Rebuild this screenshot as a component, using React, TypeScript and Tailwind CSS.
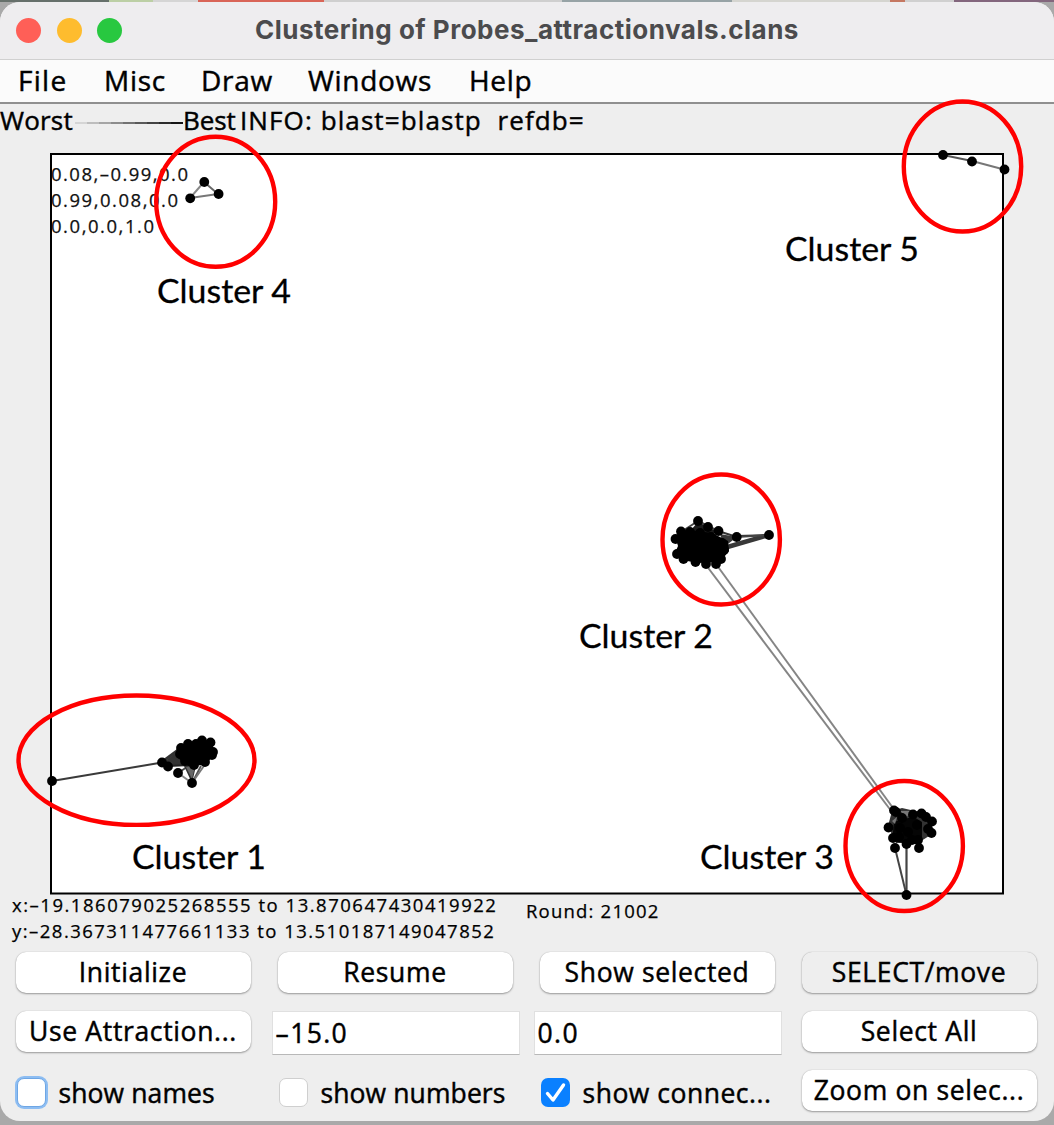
import type { ReactNode } from "react";

type Point = [number, number];
type Edge = [number, number, number, number, string, number?];

const clusters = [
  { label: "Cluster 1", x: 132, y: 869, cx: 136.5, cy: 760.2, rx: 118, ry: 64.7 },
  { label: "Cluster 2", x: 579, y: 648, cx: 721.2, cy: 539.5, rx: 58.7, ry: 65 },
  { label: "Cluster 3", x: 700, y: 869, cx: 904.2, cy: 846, rx: 58.7, ry: 65 },
  { label: "Cluster 4", x: 157, y: 303, cx: 215.7, cy: 201.8, rx: 59.5, ry: 65 },
  { label: "Cluster 5", x: 785, y: 261, cx: 962.5, cy: 166.5, rx: 58.7, ry: 65 },
];

const edges: Edge[] = [
  [943, 155, 972, 161, "#555"],
  [972, 161, 1004, 169.5, "#777"],
  [204, 182, 190, 198, "#888"],
  [204, 182, 218, 194, "#666"],
  [190, 198, 218, 194, "#777"],
  [52, 781, 162, 762.5, "#3a3a3a", 2],
  [162, 762, 185, 745, "#333", 3],
  [162, 763, 190, 765, "#333", 3],
  [168, 766, 190, 765, "#222", 2],
  [178, 773, 192, 783, "#888"],
  [178, 773, 190, 765, "#444"],
  [192, 783, 201, 766, "#555"],
  [192, 783, 206, 763, "#777"],
  [706, 565, 892, 812, "#858585", 2],
  [716, 564, 893, 808, "#858585", 2],
  [698, 521, 681, 532, "#444", 2],
  [698, 521, 718, 531, "#444", 2],
  [718, 531, 737, 537, "#333", 2],
  [737, 536, 769, 535, "#333", 2],
  [769, 535, 724, 548, "#383838", 4.5],
  [769, 535, 737, 537, "#444", 2],
  [895, 848, 906.5, 895, "#444", 2],
  [906.5, 845, 906.5, 895, "#444", 2.2],
];

const nodes: Point[] = [
  [943, 155], [972, 161.5], [1004.5, 169.5],
  [204.3, 182], [190.2, 198.3], [218.6, 194],
  [52, 781], [162, 762.5], [168, 766.5], [178, 773], [192, 783],
  [181, 748], [188, 744], [202, 740.5], [210.5, 742.5], [213, 752], [212, 755],
  [205, 762], [194, 765], [185, 761], [180, 754], [196, 744], [200, 757], [208, 748], [190, 750],
  [698, 521], [708, 527], [718.5, 531], [736.7, 537], [769, 535],
  [681, 531.5], [675.5, 539], [677, 554], [683.5, 559], [695.5, 562], [706, 564],
  [716, 564], [721, 559], [724, 550], [722, 543], [690, 532], [700, 533], [711, 537],
  [894, 810.5], [896, 812], [888.5, 827.5], [895, 848], [919, 848], [906.5, 895],
  [913, 814.5], [921.5, 813.5], [926, 817], [932, 821.5], [931.5, 833], [928, 829],
  [902, 818], [893, 838], [906.5, 844], [918, 840], [900, 828], [908, 832], [917, 825], [899, 837], [912, 840],
];

const gradient = ["#d5d5d5", "#bdbdbd", "#a5a5a5", "#8c8c8c", "#727272", "#5a5a5a", "#434343", "#2c2c2c", "#151515"];

function Plot() {
  return (
    <svg viewBox="50 153 954 742" className="block h-[742px] w-[954px] overflow-visible">
      <rect x="51" y="154" width="952" height="739.5" fill="#fff" stroke="#000" strokeWidth="2" />
      <g fontFamily="Open Sans, sans-serif" fontSize="18.5" fill="#111" stroke="#111" strokeWidth="0.25">
        <text x="51" y="180.5" textLength="137">0.08,–0.99,0.0</text>
        <text x="51" y="206.5" textLength="127">0.99,0.08,0.0</text>
        <text x="51" y="233" textLength="103">0.0,0.0,1.0</text>
      </g>
      {edges.map(([x1, y1, x2, y2, stroke, w], i) => (
        <line key={i} x1={x1} y1={y1} x2={x2} y2={y2} stroke={stroke} strokeWidth={w ?? 1.9} />
      ))}
      <path d="M164 762L182 748V764ZM184 766L192 783L196 766Z" fill="#333" />
      <path d="M186 767L192 779L195 766Z" fill="#666" />
      <path d="M720 534L737 537L724 547Z" fill="#383838" />
      <path d="M698 522L714 530V540H682Z" fill="#1c1c1c" />
      <path d="M178 748L188 742L204 742L213 746L214 756L204 765L188 766L178 758Z" fill="#000" />
      <path d="M675 536L684 530L698 531L712 533L728 541L729 551L720 562L698 563L682 560L675 553L678 546Z" fill="#000" />
      <path d="M892 811L902 808L924 813L931 822L929 836L918 843L896 843L888 826Z" fill="#333" />
      <path d="M894 822L903 819L914 817L922 822V838L910 844L892 841Z" fill="#050505" />
      <path d="M900 811L911 811L907 817ZM892 821L897 817L895 824Z" fill="#777" />
      {nodes.map(([cx, cy], i) => (
        <circle key={i} cx={cx} cy={cy} r="4.9" />
      ))}
      <g fill="none" stroke="#f00" strokeWidth="4.4">
        {clusters.map((c) => (
          <ellipse key={c.label} cx={c.cx} cy={c.cy} rx={c.rx} ry={c.ry} />
        ))}
      </g>
      <g fontFamily="Lato, sans-serif" fontSize="33" fill="#000" stroke="#000" strokeWidth="0.3">
        {clusters.map((c) => (
          <text key={c.label} x={c.x} y={c.y} textLength="134" lengthAdjust="spacingAndGlyphs">
            {c.label}
          </text>
        ))}
      </g>
    </svg>
  );
}

function Button({ children, pressed }: { children: ReactNode; pressed?: boolean }) {
  return (
    <button
      className={`h-[41px] w-[235px] rounded-[10px] pb-[2px] text-center whitespace-nowrap shadow-[0_1px_2px_rgba(0,0,0,0.35),0_0_1px_rgba(0,0,0,0.25)] ${
        pressed ? "bg-[#eeeeee]" : "bg-white"
      }`}
    >
      {children}
    </button>
  );
}

function Field({ value }: { value: string }) {
  return (
    <div className="-mx-[6px] flex h-[44px] w-[248px] items-center border border-[#e0e0e0] border-b-[#b8b8b8] bg-white pl-[3px] tracking-[1.4px]">
      {value}
    </div>
  );
}

function Check({ label, checked, focused }: { label: string; checked?: boolean; focused?: boolean }) {
  return (
    <label className="flex h-[45px] items-center gap-[13px] pl-[1px] tracking-[0.1px] whitespace-nowrap">
      {checked ? (
        <span className="flex size-[29px] items-center justify-center rounded-[7px] bg-[#0a80ff]">
          <svg viewBox="0 0 29 29" className="size-[29px]">
            <path d="M6.5 15.5L12 22L22.5 7" fill="none" stroke="#fff" strokeWidth="3.4" strokeLinecap="round" strokeLinejoin="round" />
          </svg>
        </span>
      ) : (
        <span
          className={`size-[29px] rounded-[7px] bg-white ${
            focused ? "border border-[#6ea6e4] shadow-[0_0_0_2px_#8dbdf2]" : "border border-[#cfcfcf]"
          }`}
        />
      )}
      <span className={checked ? "tracking-[0.5px]" : ""}>{label}</span>
    </label>
  );
}

export default function App() {
  return (
    <div className="h-[1125px] w-[1054px] overflow-hidden bg-[#a9a9a9] font-['Open_Sans',sans-serif] text-black [-webkit-text-stroke:0.45px_currentColor]">
      <div className="flex h-[2px]">
        <div className="w-[109px] bg-[#66706b]" />
        <div className="w-[44px] bg-[#bccfa5]" />
        <div className="w-[45px] bg-[#d5d5d5]" />
        <div className="w-[126px] bg-[#d96558]" />
        <div className="w-[238px] bg-[#cfcfcf]" />
        <div className="w-[170px] bg-[#97a3a6]" />
        <div className="w-[158px] bg-[#d5d5d0]" />
        <div className="w-[15px] bg-[#c57862]" />
        <div className="w-[49px] bg-[#d0d0d0]" />
        <div className="flex-1 bg-[#83667d]" />
      </div>
      <div className="flex h-[1119px] flex-col overflow-hidden rounded-[20px] bg-[#eeeeee]">
        <header className="flex h-[58px] shrink-0 items-center border-b border-[#d0d0d0] bg-[#eeedef] pl-[16px]">
          <div className="flex gap-[15.5px]">
            <span className="size-[25px] rounded-full bg-[#ff5f57]" />
            <span className="size-[25px] rounded-full bg-[#febc2e]" />
            <span className="size-[25px] rounded-full bg-[#28c840]" />
          </div>
          <h1 className="ml-[133px] pb-[3px] font-['Inter',sans-serif] text-[26px] font-bold tracking-[0.5px] whitespace-nowrap text-[#4b4b4d] [-webkit-text-stroke:0px]">
            Clustering of Probes_attractionvals.clans
          </h1>
        </header>
        <nav className="flex h-[44px] shrink-0 items-center border-b-2 border-[#8f8f8f] bg-[#fbfbfb] pb-[2px] pl-[18px] text-[28px] tracking-[0.7px]">
          <span className="w-[86px] tracking-[1.3px]">File</span>
          <span className="w-[97px]">Misc</span>
          <span className="w-[107px]">Draw</span>
          <span className="w-[161px]">Windows</span>
          <span>Help</span>
        </nav>
        <div className="flex h-[33px] shrink-0 items-center text-[26px] tracking-[0.2px] whitespace-pre">
          <span className="w-[75px]">Worst</span>
          <span className="mt-[4px] flex w-[108px]">
            {gradient.map((c) => (
              <span key={c} className="h-[2px] w-[12px]" style={{ backgroundColor: c }} />
            ))}
          </span>
          <span className="w-[57px] tracking-[-0.1px]">Best</span>
          <span className="tracking-[1.1px]">INFO: blast=blastp  refdb=</span>
        </div>
        <main className="mt-[16px] ml-[50px] h-[742px] shrink-0">
          <Plot />
        </main>
        <div className="flex h-[57px] shrink-0 pl-[12px] text-[18.5px] leading-[26px] tracking-[1.2px] whitespace-nowrap [-webkit-text-stroke:0.25px_currentColor]">
          <div className="-mt-[3px] w-[514px] tracking-[1.51px]">
            <div>x:–19.186079025268555 to 13.870647430419922</div>
            <div className="tracking-[1.47px]">y:–28.367311477661133 to 13.510187149047852</div>
          </div>
          <div className="mt-[3px]">Round: 21002</div>
        </div>
        <section className="grid shrink-0 grid-cols-[repeat(4,236px)] gap-x-[26px] pl-[15.5px] text-[26.5px] leading-[36px] tracking-[0.65px]">
          <div className="flex h-[59px] items-start"><Button>Initialize</Button></div>
          <div className="flex h-[59px] items-start"><Button>Resume</Button></div>
          <div className="flex h-[59px] items-start"><Button>Show selected</Button></div>
          <div className="flex h-[59px] items-start"><Button pressed>SELECT/move</Button></div>
          <div className="flex h-[59px] items-start"><Button>Use Attraction...</Button></div>
          <div className="flex h-[59px] items-start"><Field value="–15.0" /></div>
          <div className="flex h-[59px] items-start"><Field value="0.0" /></div>
          <div className="flex h-[59px] items-start"><Button>Select All</Button></div>
          <Check label="show names" focused />
          <Check label="show numbers" />
          <Check label="show connec..." checked />
          <Button>Zoom on selec...</Button>
        </section>
      </div>
    </div>
  );
}
